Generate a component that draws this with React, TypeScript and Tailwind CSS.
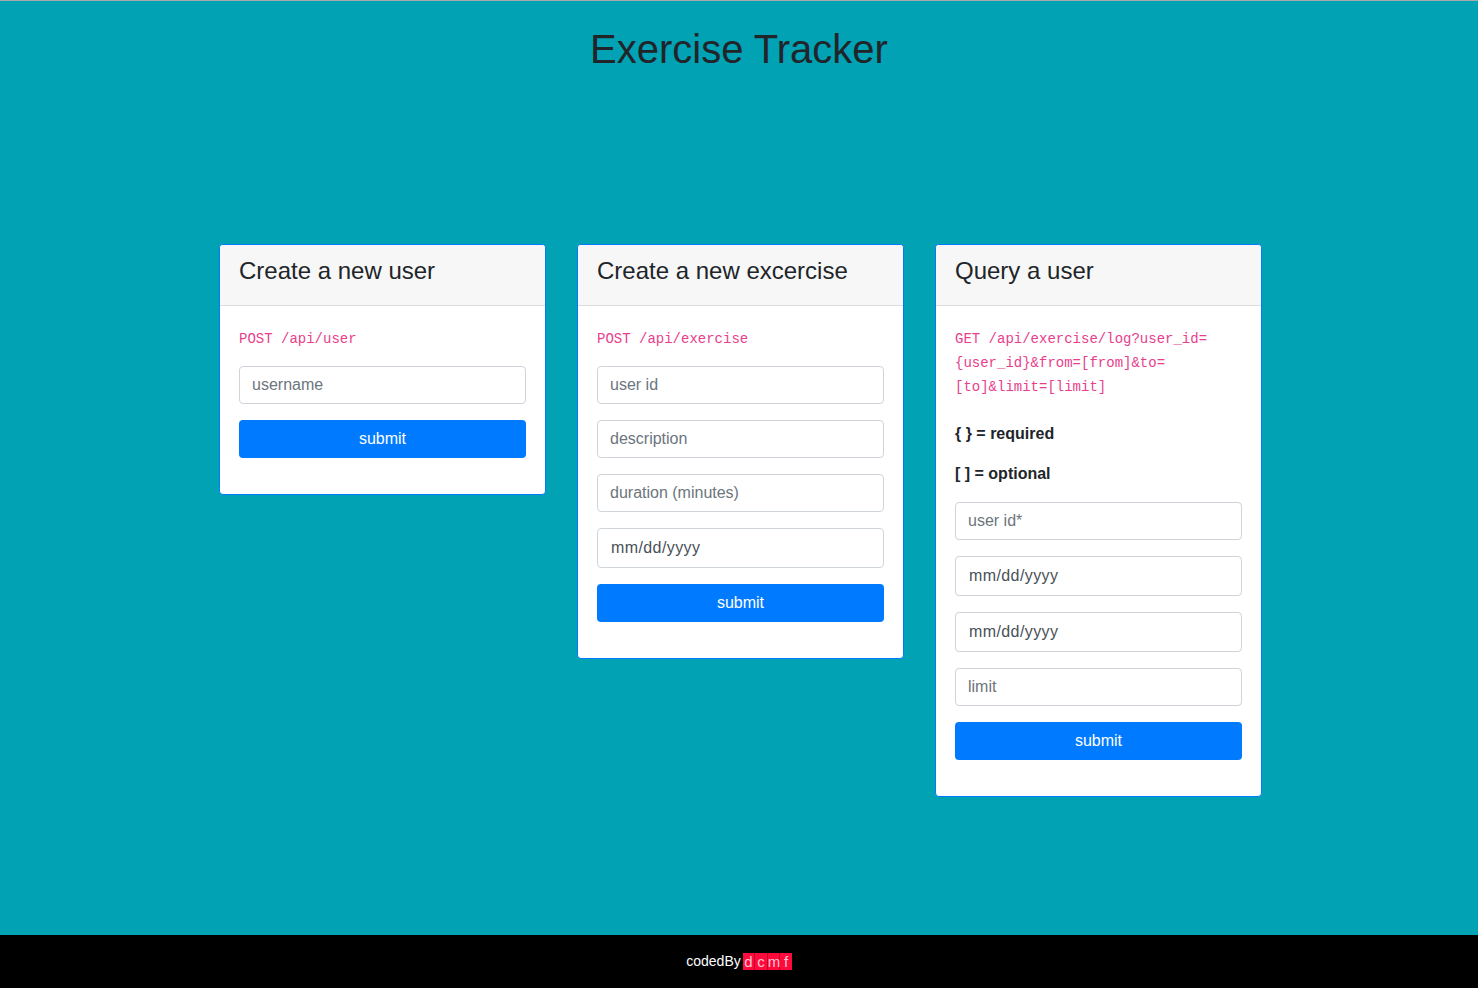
const inputCls =
  'block w-full h-[38px] px-3 rounded-[4px] border border-[#ced4da] bg-white text-[16px] text-[#495057] placeholder:text-[#6c757d] outline-none'
const dateCls =
  'block w-full h-[40px] px-[13px] rounded-[4px] border border-[#ced4da] bg-white text-[16px] tracking-[0.4px] text-[#495057] placeholder:text-[#495057] outline-none'
const btnCls =
  'block w-full h-[38px] rounded-[4px] bg-[#007bff] text-white text-[16px] leading-[38px] text-center'

function Card({ title, children }: { title: string; children: React.ReactNode }) {
  return (
    <div className="w-[327px] bg-white border border-[#007bff] rounded-[4px] overflow-hidden">
      <div className="h-[61px] px-[19px] pt-3 bg-[#f7f7f7] border-b border-[#dcdcdc]">
        <h4 className="text-[24px] leading-[28.8px] text-[#212529]">{title}</h4>
      </div>
      <div className="px-[19px] pt-5 pb-5">{children}</div>
    </div>
  )
}

function Code({ children }: { children: React.ReactNode }) {
  return (
    <p className="leading-6 text-[16px]">
      <code className="text-[14px] leading-[20px] text-[#e83e8c] font-['Liberation_Mono',monospace]">{children}</code>
    </p>
  )
}

export default function App() {
  return (
    <div className="min-h-screen flex flex-col bg-[#02a2b5] border-t border-[#a9a9a9] font-['Liberation_Sans',Arial,sans-serif]">
      <main className="flex-1">
        <h1 className="mt-6 text-center text-[40px] leading-[48px] text-[#212529]">Exercise Tracker</h1>

        <div className="mt-[171px] pl-[3px] flex justify-center items-start gap-[31px]">
          <Card title="Create a new user">
            <div className="mb-4">
              <Code>POST /api/user</Code>
            </div>
            <form className="mb-4" onSubmit={e => e.preventDefault()}>
              <input className={inputCls + ' mb-4'} placeholder="username" />
              <button type="submit" className={btnCls}>submit</button>
            </form>
          </Card>

          <Card title="Create a new excercise">
            <div className="mb-4">
              <Code>POST /api/exercise</Code>
            </div>
            <form className="mb-4" onSubmit={e => e.preventDefault()}>
              <input className={inputCls + ' mb-4'} placeholder="user id" />
              <input className={inputCls + ' mb-4'} placeholder="description" />
              <input className={inputCls + ' mb-4'} placeholder="duration (minutes)" />
              <input className={dateCls + ' mb-4'} placeholder="mm/dd/yyyy" />
              <button type="submit" className={btnCls}>submit</button>
            </form>
          </Card>

          <Card title="Query a user">
            <div className="mb-6">
              <Code>
                GET /api/exercise/log?user_id=
                <br />
                {'{user_id}&from=[from]&to='}
                <br />
                [to]&amp;limit=[limit]
              </Code>
            </div>
            <p className="font-bold text-[16px] leading-6 text-[#212529] mb-4">{'{ } = required'}</p>
            <p className="font-bold text-[16px] leading-6 text-[#212529] mb-4">[ ] = optional</p>
            <form className="mb-4" onSubmit={e => e.preventDefault()}>
              <input className={inputCls + ' mb-4'} placeholder="user id*" />
              <input className={dateCls + ' mb-4'} placeholder="mm/dd/yyyy" />
              <input className={dateCls + ' mb-4'} placeholder="mm/dd/yyyy" />
              <input className={inputCls + ' mb-4'} placeholder="limit" />
              <button type="submit" className={btnCls}>submit</button>
            </form>
          </Card>
        </div>
      </main>

      <footer className="h-[53px] bg-black flex items-center justify-center text-[14px] text-white">
        <span>codedBy</span>
        <span className="ml-[2px] inline-flex gap-px bg-[#c4002a] h-[17px]">
          {['d', 'c', 'm', 'f'].map(ch => (
            <span key={ch} className="w-[11.5px] bg-[#ff0a3c] text-center text-[15px] leading-[17px] text-[#ffc4d0]">
              {ch}
            </span>
          ))}
        </span>
      </footer>
    </div>
  )
}
